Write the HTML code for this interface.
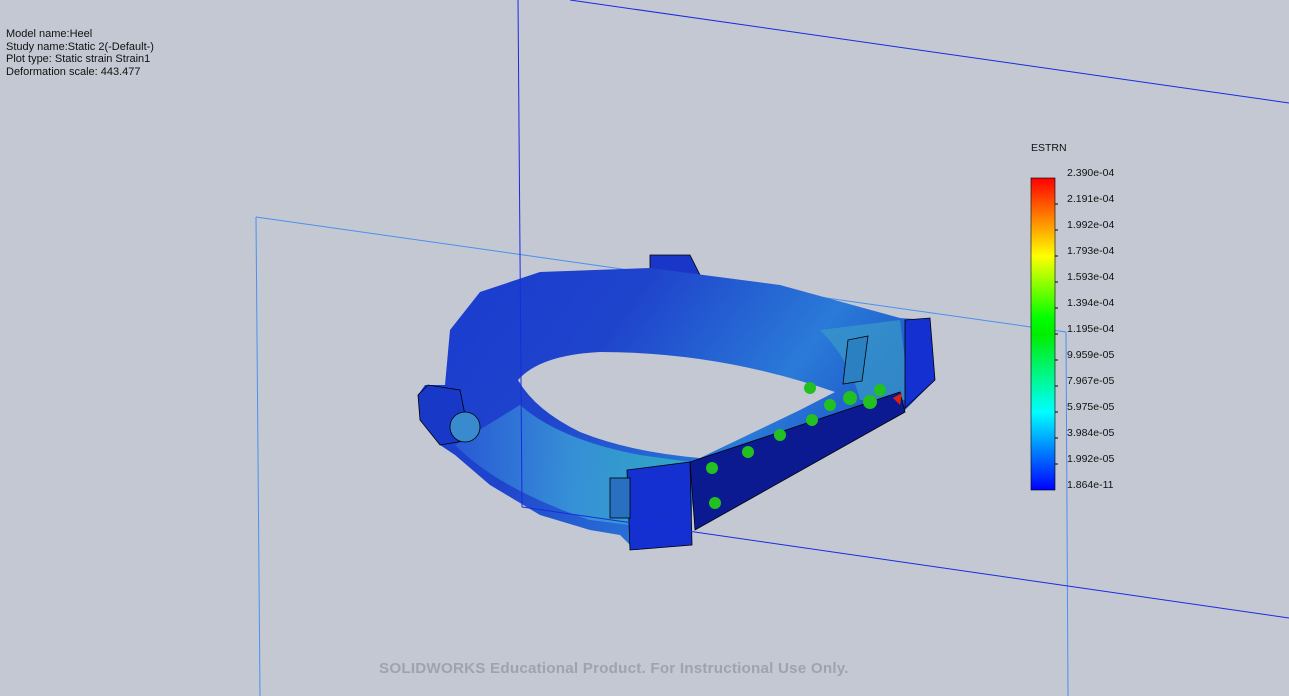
<!DOCTYPE html>
<html><head><style>
html,body{margin:0;padding:0;width:1289px;height:696px;overflow:hidden;background:#c3c8d2;font-family:"Liberation Sans",sans-serif}
.info{position:absolute;left:6px;top:28px;font-size:11px;line-height:12.5px;color:#111}
.lbl{position:absolute;left:1067px;font-size:10.5px;color:#111}
.wm{position:absolute;left:379px;top:660px;font-size:15.2px;font-weight:bold;color:#9ea3ad;letter-spacing:0.2px}
</style></head><body>
<svg width="1289" height="696" style="position:absolute;left:0;top:0">
<defs>
<linearGradient id="leg" x1="0" y1="0" x2="0" y2="1">
<stop offset="0" stop-color="#ff0000"/><stop offset="0.25" stop-color="#ffff00"/><stop offset="0.45" stop-color="#00ff00"/><stop offset="0.5" stop-color="#00ee00"/><stop offset="0.75" stop-color="#00ffff"/><stop offset="1" stop-color="#0000ff"/>
</linearGradient>
<linearGradient id="ring" x1="0" y1="0" x2="1" y2="0.4">
<stop offset="0" stop-color="#1a3ad0"/><stop offset="0.4" stop-color="#1f44cc"/><stop offset="0.75" stop-color="#2a7ad8"/><stop offset="1" stop-color="#1a50c8"/>
</linearGradient>
<linearGradient id="front" x1="0" y1="0" x2="1" y2="0">
<stop offset="0" stop-color="#2a5ed6"/><stop offset="0.5" stop-color="#3a9ad8"/><stop offset="1" stop-color="#30b0c0"/>
</linearGradient>
</defs>
<line x1="570" y1="0" x2="1289" y2="103" stroke="#1a2ae0" stroke-width="1"/>
<line x1="256" y1="217" x2="1066" y2="332" stroke="#4a90f0" stroke-width="1"/>
<line x1="256" y1="217" x2="260" y2="696" stroke="#4a90f0" stroke-width="1"/>
<line x1="1066" y1="332" x2="1068" y2="696" stroke="#4a90f0" stroke-width="1"/>
<!-- model -->
<path d="M650,255 L690,255 L700,275 L650,275 Z" fill="#1a36c8" stroke="#000" stroke-width="0.8"/>
<path d="M418,395 L425,385 L445,385 L450,330 L480,292 L540,272 L650,268 L780,285 L900,318 L928,320 L935,380 L905,410 L695,462 L690,545 L635,550 L620,535 L590,530 L540,515 L490,485 L455,455 L440,445 L420,420 Z" fill="url(#ring)"/>
<path d="M455,445 Q500,490 590,520 L630,525 L690,462 L640,455 Q560,440 520,405 Z" fill="url(#front)" opacity="0.85"/>
<path d="M820,330 L900,320 L910,400 L860,400 Q850,360 820,330Z" fill="#3a9ac8" opacity="0.7"/>
<path d="M518,380 Q540,355 600,352 Q720,352 835,392 L800,410 L700,458 Q630,452 580,432 Q535,410 518,380 Z" fill="#c3c8d2"/>
<path d="M690,462 L900,392 L905,412 L695,530 Z" fill="#0b1a90" stroke="#000" stroke-width="0.8"/>
<path d="M627,470 L690,462 L692,545 L630,550 Z" fill="#1530d0" stroke="#000" stroke-width="0.8"/>
<path d="M905,320 L930,318 L935,380 L905,408 Z" fill="#1530d0" stroke="#000" stroke-width="0.8"/>
<path d="M418,395 L428,385 L460,390 L470,440 L440,445 L420,420 Z" fill="#1838c8" stroke="#000" stroke-width="0.8"/>
<circle cx="465" cy="427" r="15" fill="#3a8ad0" stroke="#000" stroke-width="0.8"/>
<path d="M848,340 L868,336 L862,381 L843,384 Z" fill="#2a80c0" stroke="#000" stroke-width="0.8"/>
<rect x="610" y="478" width="20" height="40" fill="#2a70c0" stroke="#000" stroke-width="0.8"/>
<g fill="#22c020">
<circle cx="715" cy="503" r="6"/><circle cx="712" cy="468" r="6"/><circle cx="748" cy="452" r="6"/><circle cx="780" cy="435" r="6"/><circle cx="812" cy="420" r="6"/><circle cx="830" cy="405" r="6"/><circle cx="850" cy="398" r="7"/><circle cx="870" cy="402" r="7"/><circle cx="810" cy="388" r="6"/><circle cx="880" cy="390" r="6"/>
</g>
<path d="M893,398 L902,393 L900,405Z" fill="#e02010"/>
<line x1="518" y1="0" x2="522" y2="507" stroke="#1a2ae0" stroke-width="1"/>
<line x1="522" y1="507" x2="1289" y2="618" stroke="#1a2ae0" stroke-width="1"/>
<!-- legend -->
<rect x="1031" y="178" width="24" height="312" fill="url(#leg)" stroke="#000" stroke-width="0.6"/>
<g stroke="#000" stroke-width="1">
<line x1="1055" y1="204" x2="1058" y2="204"/><line x1="1055" y1="230" x2="1058" y2="230"/><line x1="1055" y1="256" x2="1058" y2="256"/><line x1="1055" y1="282" x2="1058" y2="282"/><line x1="1055" y1="308" x2="1058" y2="308"/><line x1="1055" y1="334" x2="1058" y2="334"/><line x1="1055" y1="360" x2="1058" y2="360"/><line x1="1055" y1="386" x2="1058" y2="386"/><line x1="1055" y1="412" x2="1058" y2="412"/><line x1="1055" y1="438" x2="1058" y2="438"/><line x1="1055" y1="464" x2="1058" y2="464"/>
</g>
</svg>
<div class="info">Model name:Heel<br>Study name:Static 2(-Default-)<br>Plot type: Static strain Strain1<br>Deformation scale: 443.477</div>
<div class="lbl" style="left:1031px;top:142px">ESTRN</div>
<div class="lbl" style="top:167px">2.390e-04</div>
<div class="lbl" style="top:193px">2.191e-04</div>
<div class="lbl" style="top:219px">1.992e-04</div>
<div class="lbl" style="top:245px">1.793e-04</div>
<div class="lbl" style="top:271px">1.593e-04</div>
<div class="lbl" style="top:297px">1.394e-04</div>
<div class="lbl" style="top:323px">1.195e-04</div>
<div class="lbl" style="top:349px">9.959e-05</div>
<div class="lbl" style="top:375px">7.967e-05</div>
<div class="lbl" style="top:401px">5.975e-05</div>
<div class="lbl" style="top:427px">3.984e-05</div>
<div class="lbl" style="top:453px">1.992e-05</div>
<div class="lbl" style="top:479px">1.864e-11</div>
<div class="wm">SOLIDWORKS Educational Product. For Instructional Use Only.</div>
</body></html>
